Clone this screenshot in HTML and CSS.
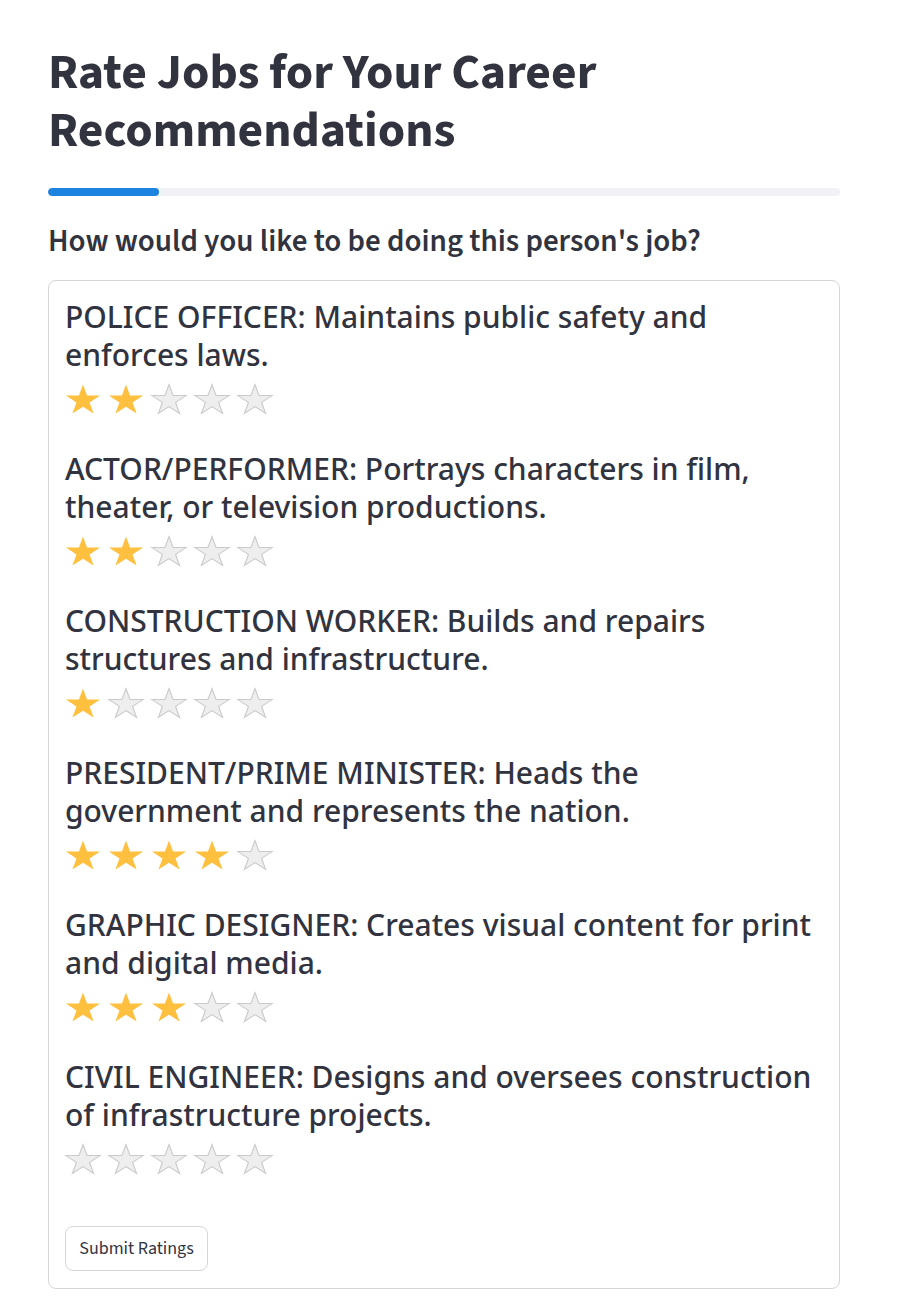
FILE: index.html
```html
<!DOCTYPE html>
<html>
<head>
<meta charset="utf-8">
<link rel="stylesheet" href="styles.css">
</head>
<body>
<main class="page">
  <h1 class="title">Rate Jobs for Your Career Recommendations</h1>
  <div class="progress"><div class="progress-fill" style="width:14%"></div></div>
  <h3 class="question">How would you like to be doing this person's job?</h3>
  <form class="card">
    <div class="job">
      <p class="job-text">POLICE OFFICER: Maintains public safety and enforces laws.</p>
      <div class="stars">
        <svg class="star on" viewBox="0 -0.6 34 31.95" preserveAspectRatio="none"><polygon points="17,0 20.82,11.74 33.17,11.75 23.18,19.01 27,30.75 17,23.5 7,30.75 10.82,19.01 0.83,11.75 13.18,11.74"/></svg>
        <svg class="star on" viewBox="0 -0.6 34 31.95" preserveAspectRatio="none"><polygon points="17,0 20.82,11.74 33.17,11.75 23.18,19.01 27,30.75 17,23.5 7,30.75 10.82,19.01 0.83,11.75 13.18,11.74"/></svg>
        <svg class="star off" viewBox="0 -0.6 34 31.95" preserveAspectRatio="none"><polygon points="17,0 20.82,11.74 33.17,11.75 23.18,19.01 27,30.75 17,23.5 7,30.75 10.82,19.01 0.83,11.75 13.18,11.74"/></svg>
        <svg class="star off" viewBox="0 -0.6 34 31.95" preserveAspectRatio="none"><polygon points="17,0 20.82,11.74 33.17,11.75 23.18,19.01 27,30.75 17,23.5 7,30.75 10.82,19.01 0.83,11.75 13.18,11.74"/></svg>
        <svg class="star off" viewBox="0 -0.6 34 31.95" preserveAspectRatio="none"><polygon points="17,0 20.82,11.74 33.17,11.75 23.18,19.01 27,30.75 17,23.5 7,30.75 10.82,19.01 0.83,11.75 13.18,11.74"/></svg>
      </div>
    </div>
    <div class="job">
      <p class="job-text">ACTOR/PERFORMER: Portrays characters in film, theater, or television productions.</p>
      <div class="stars">
        <svg class="star on" viewBox="0 -0.6 34 31.95" preserveAspectRatio="none"><polygon points="17,0 20.82,11.74 33.17,11.75 23.18,19.01 27,30.75 17,23.5 7,30.75 10.82,19.01 0.83,11.75 13.18,11.74"/></svg>
        <svg class="star on" viewBox="0 -0.6 34 31.95" preserveAspectRatio="none"><polygon points="17,0 20.82,11.74 33.17,11.75 23.18,19.01 27,30.75 17,23.5 7,30.75 10.82,19.01 0.83,11.75 13.18,11.74"/></svg>
        <svg class="star off" viewBox="0 -0.6 34 31.95" preserveAspectRatio="none"><polygon points="17,0 20.82,11.74 33.17,11.75 23.18,19.01 27,30.75 17,23.5 7,30.75 10.82,19.01 0.83,11.75 13.18,11.74"/></svg>
        <svg class="star off" viewBox="0 -0.6 34 31.95" preserveAspectRatio="none"><polygon points="17,0 20.82,11.74 33.17,11.75 23.18,19.01 27,30.75 17,23.5 7,30.75 10.82,19.01 0.83,11.75 13.18,11.74"/></svg>
        <svg class="star off" viewBox="0 -0.6 34 31.95" preserveAspectRatio="none"><polygon points="17,0 20.82,11.74 33.17,11.75 23.18,19.01 27,30.75 17,23.5 7,30.75 10.82,19.01 0.83,11.75 13.18,11.74"/></svg>
      </div>
    </div>
    <div class="job">
      <p class="job-text">CONSTRUCTION WORKER: Builds and repairs structures and infrastructure.</p>
      <div class="stars">
        <svg class="star on" viewBox="0 -0.6 34 31.95" preserveAspectRatio="none"><polygon points="17,0 20.82,11.74 33.17,11.75 23.18,19.01 27,30.75 17,23.5 7,30.75 10.82,19.01 0.83,11.75 13.18,11.74"/></svg>
        <svg class="star off" viewBox="0 -0.6 34 31.95" preserveAspectRatio="none"><polygon points="17,0 20.82,11.74 33.17,11.75 23.18,19.01 27,30.75 17,23.5 7,30.75 10.82,19.01 0.83,11.75 13.18,11.74"/></svg>
        <svg class="star off" viewBox="0 -0.6 34 31.95" preserveAspectRatio="none"><polygon points="17,0 20.82,11.74 33.17,11.75 23.18,19.01 27,30.75 17,23.5 7,30.75 10.82,19.01 0.83,11.75 13.18,11.74"/></svg>
        <svg class="star off" viewBox="0 -0.6 34 31.95" preserveAspectRatio="none"><polygon points="17,0 20.82,11.74 33.17,11.75 23.18,19.01 27,30.75 17,23.5 7,30.75 10.82,19.01 0.83,11.75 13.18,11.74"/></svg>
        <svg class="star off" viewBox="0 -0.6 34 31.95" preserveAspectRatio="none"><polygon points="17,0 20.82,11.74 33.17,11.75 23.18,19.01 27,30.75 17,23.5 7,30.75 10.82,19.01 0.83,11.75 13.18,11.74"/></svg>
      </div>
    </div>
    <div class="job">
      <p class="job-text">PRESIDENT/PRIME MINISTER: Heads the government and represents the nation.</p>
      <div class="stars">
        <svg class="star on" viewBox="0 -0.6 34 31.95" preserveAspectRatio="none"><polygon points="17,0 20.82,11.74 33.17,11.75 23.18,19.01 27,30.75 17,23.5 7,30.75 10.82,19.01 0.83,11.75 13.18,11.74"/></svg>
        <svg class="star on" viewBox="0 -0.6 34 31.95" preserveAspectRatio="none"><polygon points="17,0 20.82,11.74 33.17,11.75 23.18,19.01 27,30.75 17,23.5 7,30.75 10.82,19.01 0.83,11.75 13.18,11.74"/></svg>
        <svg class="star on" viewBox="0 -0.6 34 31.95" preserveAspectRatio="none"><polygon points="17,0 20.82,11.74 33.17,11.75 23.18,19.01 27,30.75 17,23.5 7,30.75 10.82,19.01 0.83,11.75 13.18,11.74"/></svg>
        <svg class="star on" viewBox="0 -0.6 34 31.95" preserveAspectRatio="none"><polygon points="17,0 20.82,11.74 33.17,11.75 23.18,19.01 27,30.75 17,23.5 7,30.75 10.82,19.01 0.83,11.75 13.18,11.74"/></svg>
        <svg class="star off" viewBox="0 -0.6 34 31.95" preserveAspectRatio="none"><polygon points="17,0 20.82,11.74 33.17,11.75 23.18,19.01 27,30.75 17,23.5 7,30.75 10.82,19.01 0.83,11.75 13.18,11.74"/></svg>
      </div>
    </div>
    <div class="job">
      <p class="job-text">GRAPHIC DESIGNER: Creates visual content for print and digital media.</p>
      <div class="stars">
        <svg class="star on" viewBox="0 -0.6 34 31.95" preserveAspectRatio="none"><polygon points="17,0 20.82,11.74 33.17,11.75 23.18,19.01 27,30.75 17,23.5 7,30.75 10.82,19.01 0.83,11.75 13.18,11.74"/></svg>
        <svg class="star on" viewBox="0 -0.6 34 31.95" preserveAspectRatio="none"><polygon points="17,0 20.82,11.74 33.17,11.75 23.18,19.01 27,30.75 17,23.5 7,30.75 10.82,19.01 0.83,11.75 13.18,11.74"/></svg>
        <svg class="star on" viewBox="0 -0.6 34 31.95" preserveAspectRatio="none"><polygon points="17,0 20.82,11.74 33.17,11.75 23.18,19.01 27,30.75 17,23.5 7,30.75 10.82,19.01 0.83,11.75 13.18,11.74"/></svg>
        <svg class="star off" viewBox="0 -0.6 34 31.95" preserveAspectRatio="none"><polygon points="17,0 20.82,11.74 33.17,11.75 23.18,19.01 27,30.75 17,23.5 7,30.75 10.82,19.01 0.83,11.75 13.18,11.74"/></svg>
        <svg class="star off" viewBox="0 -0.6 34 31.95" preserveAspectRatio="none"><polygon points="17,0 20.82,11.74 33.17,11.75 23.18,19.01 27,30.75 17,23.5 7,30.75 10.82,19.01 0.83,11.75 13.18,11.74"/></svg>
      </div>
    </div>
    <div class="job">
      <p class="job-text">CIVIL ENGINEER: Designs and oversees construction of infrastructure projects.</p>
      <div class="stars">
        <svg class="star off" viewBox="0 -0.6 34 31.95" preserveAspectRatio="none"><polygon points="17,0 20.82,11.74 33.17,11.75 23.18,19.01 27,30.75 17,23.5 7,30.75 10.82,19.01 0.83,11.75 13.18,11.74"/></svg>
        <svg class="star off" viewBox="0 -0.6 34 31.95" preserveAspectRatio="none"><polygon points="17,0 20.82,11.74 33.17,11.75 23.18,19.01 27,30.75 17,23.5 7,30.75 10.82,19.01 0.83,11.75 13.18,11.74"/></svg>
        <svg class="star off" viewBox="0 -0.6 34 31.95" preserveAspectRatio="none"><polygon points="17,0 20.82,11.74 33.17,11.75 23.18,19.01 27,30.75 17,23.5 7,30.75 10.82,19.01 0.83,11.75 13.18,11.74"/></svg>
        <svg class="star off" viewBox="0 -0.6 34 31.95" preserveAspectRatio="none"><polygon points="17,0 20.82,11.74 33.17,11.75 23.18,19.01 27,30.75 17,23.5 7,30.75 10.82,19.01 0.83,11.75 13.18,11.74"/></svg>
        <svg class="star off" viewBox="0 -0.6 34 31.95" preserveAspectRatio="none"><polygon points="17,0 20.82,11.74 33.17,11.75 23.18,19.01 27,30.75 17,23.5 7,30.75 10.82,19.01 0.83,11.75 13.18,11.74"/></svg>
      </div>
    </div>
    <div class="actions">
      <button type="button" class="btn">Submit Ratings</button>
    </div>
  </form>
</main>
</body>
</html>
```

FILE: styles.css
```css
html, body {
  margin: 0;
  padding: 0;
  background: #ffffff;
}
body {
  font-family: "Source Sans Pro", "Source Sans 3", Lato, "Noto Sans", sans-serif;
  color: #31333f;
}
.page {
  width: 792px;
  padding: 44px 0 0 48px;
}
.title {
  margin: 0;
  font-size: 49.5px;
  line-height: 58px;
  font-weight: 700;
}
.progress {
  margin-top: 28px;
  height: 8px;
  border-radius: 4px;
  background: #f0f2f6;
  overflow: hidden;
}
.progress-fill {
  height: 100%;
  background: #1c83e1;
  border-radius: 4px;
}
.question {
  margin: 26px 0 0 0;
  font-size: 31px;
  line-height: 38px;
  font-weight: 600;
}
.card {
  margin-top: 20px;
  border: 1px solid #d6d6d9;
  border-radius: 8px;
  padding: 17px 16px 17px 16px;
}
.job-text {
  margin: 0;
  font-family: "Segoe UI", "Noto Sans", "Open Sans", sans-serif;
  font-size: 30px;
  line-height: 38px;
  font-weight: 500;
}
.stars {
  display: flex;
  gap: 7px;
  margin-top: 10px;
  margin-bottom: 36px;
  height: 30px;
}
.star {
  width: 36px;
  height: 30px;
  display: block;
  overflow: visible;
}
.star.on polygon {
  fill: #ffbf3f;
}
.star.off polygon {
  fill: #eeeeee;
  stroke: #cacaca;
  stroke-width: 1.1;
}
.actions {
  padding-top: 16px;
}
.btn {
  font-family: "Source Sans Pro", "Source Sans 3", sans-serif;
  font-size: 18px;
  color: #31333f;
  background: #ffffff;
  border: 1px solid #d6d6d9;
  border-radius: 8px;
  width: 143px;
  height: 45px;
  padding: 0;
  cursor: pointer;
}
```
